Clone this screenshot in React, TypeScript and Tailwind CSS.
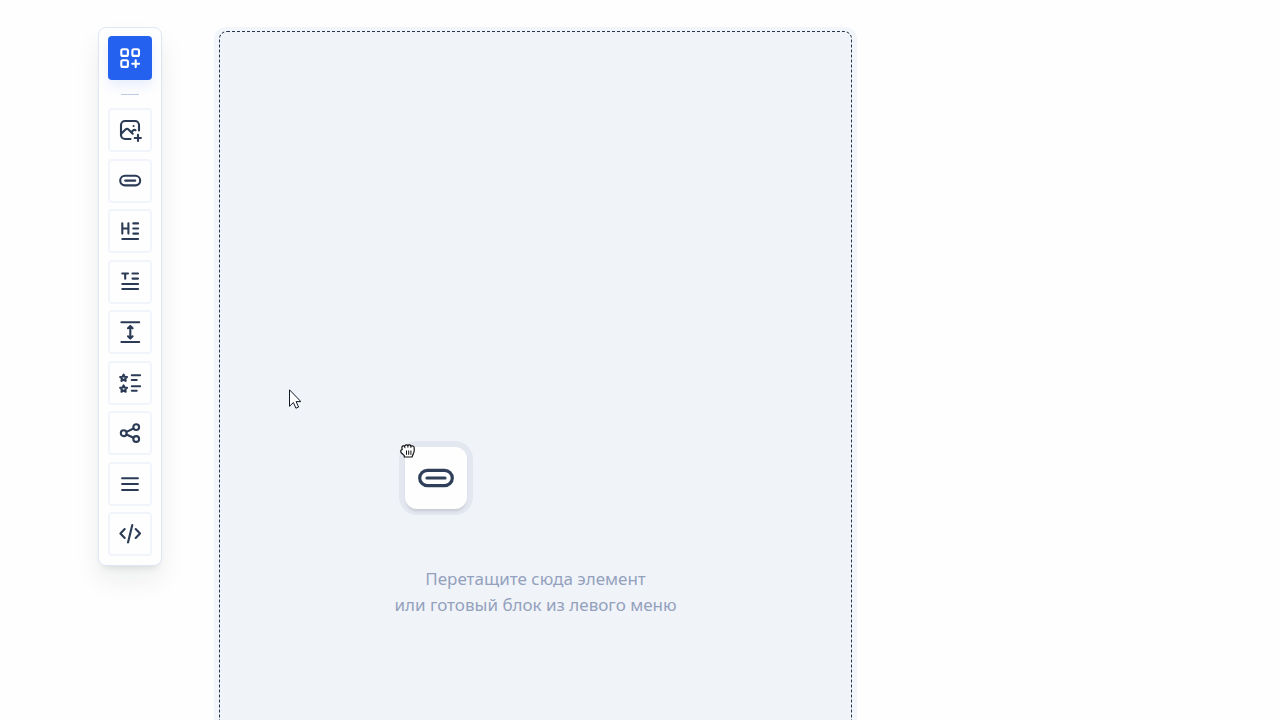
import type { ReactNode } from "react";
import clsx from "clsx";

type Tool = {
  name: string;
  icon: ReactNode;
};

function Icon({ children }: { children: ReactNode }) {
  return (
    <svg
      className="size-6"
      viewBox="0 0 24 24"
      fill="none"
      stroke="currentColor"
      strokeWidth={2.1}
      strokeLinecap="round"
      strokeLinejoin="round"
      aria-hidden="true"
    >
      {children}
    </svg>
  );
}

const tools: Tool[] = [
  {
    name: "Изображение",
    icon: (
      <>
        <path d="M15.6 8h.01" />
        <path d="M12.5 21H7a4 4 0 0 1-4-4V7a4 4 0 0 1 4-4h10a4 4 0 0 1 4 4v5.5" />
        <path d="M3 16l4.5-4.5c1-1 2-1 3 0l4.2 4.2" />
        <path d="M13.5 14l1.5-1.5c.7-.7 1.5-.9 2.5-.3" />
        <path d="M16.7 20h6.2M20 16.7v6.2" />
      </>
    ),
  },
  {
    name: "Кнопка",
    icon: (
      <>
        <rect x="2.2" y="6.8" width="20" height="9.6" rx="4.8" />
        <path d="M7.2 11.6h10" />
      </>
    ),
  },
  {
    name: "Заголовок",
    icon: (
      <>
        <path d="M4.3 4.2v10.4M10.4 4.2v10.4M4.3 9.5h6.1" />
        <path d="M15.3 4.4h4.8M15.3 9.5h4.8M15.3 14.6h4.8" />
        <path d="M4.3 20h15.8" />
      </>
    ),
  },
  {
    name: "Текст",
    icon: (
      <>
        <path d="M4.3 3.5H10M7.2 3.5v5.2" />
        <path d="M14.5 3.5h5.5M14.5 8.6h5.5" />
        <path d="M4.3 14h15.8M4.3 19h15.8" />
      </>
    ),
  },
  {
    name: "Отступ",
    icon: (
      <>
        <path d="M3.4 2.2h17.8M3.4 22h17.8" />
        <path d="M12.3 6v12.5M10 8.2l2.3-2.3 2.3 2.3M10 16.3l2.3 2.3 2.3-2.3" />
      </>
    ),
  },
  {
    name: "Список",
    icon: (
      <>
        <path d="M5.6 3.6l1 2.1 2.4.3-1.7 1.6.4 2.3-2.1-1.1-2.1 1.1.4-2.3L2.2 6l2.4-.3z" />
        <path d="M5.6 14.4l1 2.1 2.4.3-1.7 1.6.4 2.3-2.1-1.1-2.1 1.1.4-2.3-1.7-1.6 2.4-.3z" />
        <path d="M13.8 4.3h8.3M13.8 9h4.9M13.8 15.2h8.3M13.8 19.8h4.9" />
      </>
    ),
  },
  {
    name: "Соцсети",
    icon: (
      <>
        <circle cx="5.7" cy="12.2" r="2.9" />
        <circle cx="18.2" cy="6.1" r="2.9" />
        <circle cx="18.2" cy="18" r="2.9" />
        <path d="M8.5 10.9l7-3.4M8.5 13.5l7 3.3" />
      </>
    ),
  },
  {
    name: "Меню",
    icon: <path d="M4.1 6.3h15.8M4.1 12h15.8M4.1 18h15.8" />,
  },
  {
    name: "HTML",
    icon: (
      <>
        <path d="M6.7 7L2.4 11.5 6.7 16M17.7 7l4.3 4.5-4.3 4.500" />
        <path d="M14.3 3L10 20.500" />
      </>
    ),
  },
];

function ToolButton({ tool }: { tool: Tool }) {
  return (
    <button
      type="button"
      aria-label={tool.name}
      className="flex size-11 items-center justify-center rounded border-2 border-[#f1f5fb] bg-[#fefefe] text-[#2b3b55] hover:cursor-grab"
    >
      <Icon>{tool.icon}</Icon>
    </button>
  );
}

function Toolbar() {
  return (
    <aside className="flex shrink-0 flex-col items-center rounded-lg border border-[#dfe7f5] bg-[#fefefe] px-[9px] pt-2 pb-[9px] shadow-[0_14px_26px_0_rgba(15,23,42,0.07),0_6px_6px_-4px_rgba(60,35,20,0.10)]">
      <button
        type="button"
        aria-label="Блоки"
        className="flex size-11 items-center justify-center rounded bg-[#2461ee] text-white shadow-[0_6px_12px_rgba(37,99,235,0.10)]"
      >
        <Icon>
          <rect x="3.3" y="3.3" width="6.6" height="6.6" rx="1.5" />
          <rect x="14.4" y="3.3" width="6.6" height="6.6" rx="1.5" />
          <rect x="3.3" y="14.3" width="6.6" height="6.6" rx="1.5" />
          <path d="M17.7 14.3v6.8M14.3 17.7h6.8" />
        </Icon>
      </button>
      <hr className="mt-3.5 mb-[13px] w-[18px] border-[#bccbe2]" />
      <div className="flex h-[448px] flex-col justify-between">
        {tools.map((tool) => (
          <ToolButton key={tool.name} tool={tool} />
        ))}
      </div>
    </aside>
  );
}

function Pointer({ className }: { className: string }) {
  return (
    <svg
      className={clsx("absolute h-5 w-3", className)}
      viewBox="0 0 12 20"
      aria-hidden="true"
    >
      <path
        d="M.5 .8v16.5l3.9-3.8 2.5 5.7 2.7-1.1-2.5-5.5h4.8z"
        fill="#fff"
        stroke="#111827"
        strokeWidth={1}
      />
    </svg>
  );
}

function GrabHand() {
  return (
    <svg
      className="absolute top-0.5 left-px size-4"
      viewBox="0 0 16 16"
      aria-hidden="true"
    >
      <path
        d="M4.3 14v-1.4L1.5 10C.3 8.6.5 6.6 2.2 6.6L1.9 4.5c-.1-1.8 1.9-2.2 2.700-1 .2-1.8 2.6-2.2 3.3-.9.8-1.2 2.8-.9 3 .6 1.200-.7 3.1-.1 3.2 1.3.3 2.4.4 4.4-.8 6.2L12 14z"
        fill="#fff"
        stroke="#111"
        strokeWidth={1.2}
        strokeLinejoin="round"
      />
      <path
        d="M6.5 7.5v4.3M8.7 7.5v4.3M10.9 7.5v4.3M4.6 3.5l.5 1.7M7.9 2.6v2M10.9 3.2v1.7"
        stroke="#111"
        strokeWidth={1}
      />
    </svg>
  );
}

// element that follows the cursor while it is being dragged
function DraggedElement() {
  return (
    <div className="absolute top-[409px] left-[179px] rounded-[18px] bg-[#e3e7ef] p-1.5">
      <div className="flex size-[62px] items-center justify-center rounded-xl bg-[#fefefe] text-[#2f3f5a] shadow-[0_3px_3px_-1px_rgba(15,23,42,0.14)]">
        <svg
          className="h-5 w-9"
          viewBox="0 0 36 20"
          fill="none"
          stroke="currentColor"
          strokeWidth={3.2}
          strokeLinecap="round"
          aria-hidden="true"
        >
          <rect x="1.7" y="2.3" width="32.6" height="15.4" rx="7.7" />
          <path d="M9 10h18" />
        </svg>
      </div>
      <GrabHand />
    </div>
  );
}

function Canvas() {
  return (
    <main className="h-screen max-w-[643px] flex-1 rounded-xl bg-[#f2f5fa] px-[5px] py-1">
      <div className="relative h-full rounded-lg border border-dashed border-[#27364f] bg-[#f0f4f9]">
        <p className="pt-[534px] text-center font-['Noto_Sans',sans-serif] text-[17px] leading-[26px] text-[#94a1bd]">
          Перетащите сюда элемент
          <br />
          или готовый блок из левого меню
        </p>
        <DraggedElement />
        <Pointer className="top-[357px] left-[69px]" />
      </div>
    </main>
  );
}

export default function App() {
  return (
    <div className="h-screen overflow-hidden bg-[#fefefe]">
      <div className="flex items-start gap-[52px] pt-[27px] pr-8 pl-[98px]">
        <Toolbar />
        <Canvas />
      </div>
    </div>
  );
}
